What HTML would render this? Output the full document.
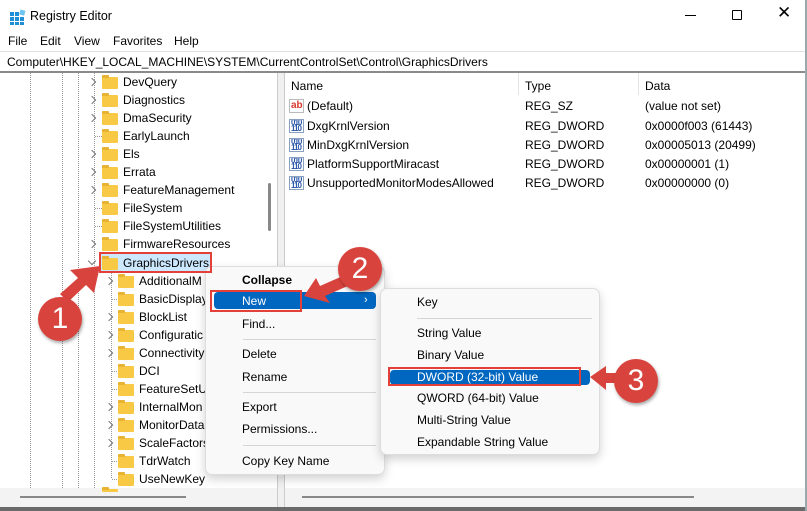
<!DOCTYPE html>
<html><head><style>
*{margin:0;padding:0;box-sizing:border-box}
body{width:807px;height:511px;overflow:hidden;background:#fff;font-family:"Liberation Sans",sans-serif;font-size:12px;color:#000;position:relative}
.a{position:absolute;white-space:nowrap}
.t{position:absolute;white-space:nowrap;line-height:14px}
.fold{position:absolute;width:16px;height:12px;background:#f8c945;border-radius:1px}
.fold:before{content:"";position:absolute;left:0;top:-2px;width:7px;height:3px;background:#e8b333;border-radius:1px 1px 0 0}
.chev{position:absolute;width:6px;height:6px;border-right:1.3px solid #777;border-bottom:1.3px solid #777;transform:rotate(-45deg)}
.vd{position:absolute;width:0;border-left:1px dotted #999}
.hd{position:absolute;height:0;border-top:1px dotted #999;width:7px}
.menu{position:absolute;background:#f9f9f9;border:1px solid #ddd;border-radius:7px;box-shadow:0 4px 10px rgba(0,0,0,.18)}
.sep{position:absolute;height:1px;background:#d5d5d5}
.hl{position:absolute;background:#0067c0;border-radius:4px}
.rb{position:absolute;border:2.5px solid #e3403a}
.circ{position:absolute;width:44px;height:44px;border-radius:50%;background:#d9433d;color:#fff;font-size:30px;text-align:center;line-height:44px;box-shadow:1px 2px 3px rgba(0,0,0,.35)}
.ic{position:absolute;width:15px;height:14px;border:1px solid #8aa0c0;background:#fff;font-size:8px;line-height:6px;color:#2a55a8;font-weight:bold;letter-spacing:-1px;overflow:hidden;padding-left:1px}
</style></head><body>
<!-- title -->
<div class="a" style="left:10px;top:9px;width:14px;height:14px">
<svg width="16" height="16"><g fill="#1e8fd6"><rect x="0" y="3" width="4" height="4"/><rect x="5" y="3" width="4" height="4"/><rect x="0" y="8" width="4" height="4"/><rect x="5" y="8" width="4" height="4"/><rect x="10" y="8" width="4" height="4"/><rect x="0" y="13" width="4" height="3"/><rect x="5" y="13" width="4" height="3"/><rect x="10" y="13" width="4" height="3"/></g><rect x="10" y="1" width="5" height="5" fill="#6cc4f0" transform="rotate(15 12 3)"/></svg></div>
<div class="t" style="left:30px;top:9px;font-size:12.5px">Registry Editor</div>
<div class="a" style="left:685px;top:15px;width:11px;height:1px;background:#000"></div>
<div class="a" style="left:732px;top:10px;width:10px;height:10px;border:1px solid #000;border-radius:1px"></div>
<div class="t" style="left:777px;top:6px;font-size:17px;font-weight:300">✕</div>
<!-- menu -->
<div class="t" style="left:8px;top:34px">File</div>
<div class="t" style="left:40px;top:34px">Edit</div>
<div class="t" style="left:74px;top:34px">View</div>
<div class="t" style="left:113px;top:34px">Favorites</div>
<div class="t" style="left:174px;top:34px">Help</div>
<div class="a" style="left:0;top:51px;width:807px;height:1px;background:#e2e2e2"></div>
<div class="t" style="left:7px;top:55px">Computer\HKEY_LOCAL_MACHINE\SYSTEM\CurrentControlSet\Control\GraphicsDrivers</div>
<div class="a" style="left:0;top:71px;width:807px;height:2px;background:#8a8a8a"></div>
<!-- splitter -->
<div class="a" style="left:277px;top:73px;width:8px;height:438px;background:#f0f0f0;border-left:1px solid #ccc;border-right:1px solid #ccc"></div>
<!-- left scrollbars -->
<div class="a" style="left:268px;top:183px;width:3px;height:48px;background:#888;border-radius:2px"></div>
<div class="a" style="left:0;top:488px;width:277px;height:20px;background:#f3f3f3"></div>
<div class="a" style="left:20px;top:496px;width:166px;height:2px;background:#888"></div>
<div class="a" style="left:285px;top:488px;width:522px;height:20px;background:#f3f3f3"></div>
<div class="a" style="left:302px;top:496px;width:392px;height:2px;background:#888"></div>
<div class="a" style="left:0;top:507px;width:807px;height:4px;background:#6a6a6a"></div>
<div class="a" style="left:805px;top:0;width:2px;height:511px;background:#9aa"></div>
<!-- tree lines -->
<div class="vd" style="left:30px;top:73px;height:415px"></div>
<div class="vd" style="left:62px;top:73px;height:415px"></div>
<div class="vd" style="left:78px;top:73px;height:415px"></div>
<div class="vd" style="left:94px;top:73px;height:415px"></div>
<div class="vd" style="left:111px;top:272px;height:206px"></div>
<!-- tree items -->
<div id="tree"></div>
<script>
var top1=[["DevQuery",1],["Diagnostics",1],["DmaSecurity",1],["EarlyLaunch",0],["Els",1],["Errata",1],["FeatureManagement",1],["FileSystem",0],["FileSystemUtilities",0],["FirmwareResources",1]];
var h="";
top1.forEach(function(it,i){var y=82+i*18;
 h+=(it[1]?'<div class="chev" style="left:89px;top:'+(y-3)+'px"></div>':'<div class="hd" style="left:95px;top:'+y+'px"></div>');
 h+='<div class="fold" style="left:102px;top:'+(y-5)+'px"></div><div class="t" style="left:123px;top:'+(y-7)+'px">'+it[0]+'</div>';});
h+='<div class="a" style="left:100px;top:253px;width:110px;height:19px;background:#cce8ff"></div>';
h+='<div class="chev" style="left:89px;top:258px;transform:rotate(45deg)"></div><div class="fold" style="left:102px;top:258px"></div><div class="t" style="left:123px;top:256px">GraphicsDrivers</div>';
var ch=[["AdditionalM",1],["BasicDisplay",0],["BlockList",1],["Configuratic",1],["Connectivity",1],["DCI",0],["FeatureSetU",0],["InternalMon",1],["MonitorData",1],["ScaleFactors",1],["TdrWatch",0],["UseNewKey",0]];
ch.forEach(function(it,i){var y=281+i*18;
 h+=(it[1]?'<div class="chev" style="left:106px;top:'+(y-3)+'px"></div>':'<div class="hd" style="left:112px;top:'+y+'px"></div>');
 h+='<div class="fold" style="left:118px;top:'+(y-5)+'px"></div><div class="t" style="left:139px;top:'+(y-7)+'px">'+it[0]+'</div>';});
h+='<div class="fold" style="left:102px;top:489px;height:3px"></div>';
document.getElementById("tree").innerHTML=h;
</script>
<!-- right pane -->
<div class="t" style="left:291px;top:79px">Name</div>
<div class="a" style="left:518px;top:73px;width:1px;height:22px;background:#e5e5e5"></div>
<div class="t" style="left:525px;top:79px">Type</div>
<div class="a" style="left:638px;top:73px;width:1px;height:22px;background:#e5e5e5"></div>
<div class="t" style="left:645px;top:79px">Data</div>
<div class="a" style="left:289px;top:99px;width:15px;height:14px;border:1px solid #bbb;color:#d8352a;font-weight:bold;font-size:10px;line-height:11px;padding-left:1px">ab</div>
<div class="t" style="left:307px;top:99px">(Default)</div>
<div class="t" style="left:525px;top:99px">REG_SZ</div>
<div class="t" style="left:645px;top:99px">(value not set)</div>
<div id="rows"></div>
<script>
var r=[["DxgKrnlVersion","0x0000f003 (61443)"],["MinDxgKrnlVersion","0x00005013 (20499)"],["PlatformSupportMiracast","0x00000001 (1)"],["UnsupportedMonitorModesAllowed","0x00000000 (0)"]];
var s="";r.forEach(function(it,i){var y=119+i*19;
s+='<div class="ic" style="left:289px;top:'+y+'px">010<br>110</div><div class="t" style="left:307px;top:'+y+'px">'+it[0]+'</div><div class="t" style="left:525px;top:'+y+'px">REG_DWORD</div><div class="t" style="left:645px;top:'+y+'px">'+it[1]+'</div>';});
document.getElementById("rows").innerHTML=s;
</script>
<!-- context menu -->
<div class="menu" style="left:205px;top:266px;width:180px;height:209px"></div>
<div class="t" style="left:242px;top:273px;font-weight:bold">Collapse</div>
<div class="hl" style="left:214px;top:292px;width:162px;height:17px"></div>
<div class="t" style="left:242px;top:294px;color:#fff">New</div>
<div class="t" style="left:364px;top:293px;color:#fff;font-size:11px">›</div>
<div class="t" style="left:242px;top:317px">Find...</div>
<div class="sep" style="left:243px;top:339px;width:133px"></div>
<div class="t" style="left:242px;top:347px">Delete</div>
<div class="t" style="left:242px;top:370px">Rename</div>
<div class="sep" style="left:243px;top:392px;width:133px"></div>
<div class="t" style="left:242px;top:400px">Export</div>
<div class="t" style="left:242px;top:422px">Permissions...</div>
<div class="sep" style="left:243px;top:445px;width:133px"></div>
<div class="t" style="left:242px;top:454px">Copy Key Name</div>
<!-- submenu -->
<div class="menu" style="left:380px;top:288px;width:220px;height:167px"></div>
<div class="t" style="left:417px;top:295px">Key</div>
<div class="sep" style="left:417px;top:318px;width:175px"></div>
<div class="t" style="left:417px;top:326px">String Value</div>
<div class="t" style="left:417px;top:348px">Binary Value</div>
<div class="hl" style="left:390px;top:370px;width:200px;height:15px"></div>
<div class="t" style="left:417px;top:370px;color:#fff">DWORD (32-bit) Value</div>
<div class="t" style="left:417px;top:391px">QWORD (64-bit) Value</div>
<div class="t" style="left:417px;top:413px">Multi-String Value</div>
<div class="t" style="left:417px;top:435px">Expandable String Value</div>
<!-- red boxes -->
<div class="rb" style="left:99px;top:252px;width:113px;height:21px"></div>
<div class="rb" style="left:210px;top:290px;width:92px;height:22px"></div>
<div class="rb" style="left:388px;top:367px;width:193px;height:19px"></div>
<!-- arrows -->
<svg class="a" style="left:0;top:0" width="807" height="511">
<g fill="#d9433d">
<polygon points="100,266 94,293 86,285 68,302 60,294 78,278 70,270"/>
<polygon points="304,296 316,278 320,286 345,275 350,285 325,296 330,303"/>
<polygon points="590,377 606,366 606,373 620,373 620,383 606,383 606,390"/>
</g></svg>
<div class="circ" style="left:38px;top:297px">1</div>
<div class="circ" style="left:338px;top:247px">2</div>
<div class="circ" style="left:614px;top:359px">3</div>
</body></html>
